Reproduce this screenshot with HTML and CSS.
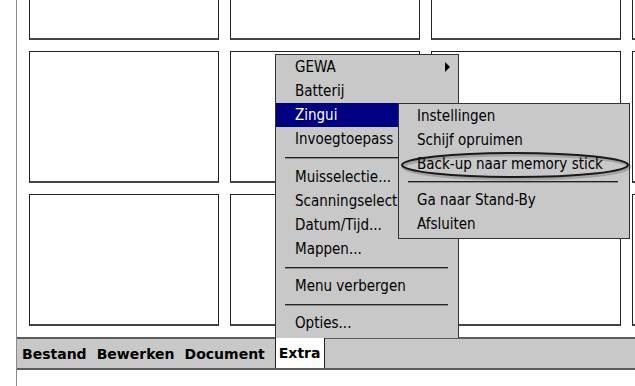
FILE: index.html
```html
<!DOCTYPE html>
<html lang="nl">
  <head>
    <meta charset="utf-8" />
    <title>Extra menu</title>
    <link rel="stylesheet" href="styles.css">
  </head>
  <body>
    <div class="device">
      <div class="workspace">
        <div class="grid">
          <div class="cell"></div><div class="cell"></div><div class="cell"></div><div class="cell"></div>
          <div class="cell"></div><div class="cell"></div><div class="cell"></div><div class="cell"></div>
          <div class="cell"></div><div class="cell"></div><div class="cell"></div><div class="cell"></div>
        </div>
      </div>

      <div class="menubar">
        <span class="mb-item">Bestand</span>
        <span class="mb-item">Bewerken</span>
        <span class="mb-item">Document</span>
        <span class="mb-item active">Extra</span>
      </div>

      <ul class="popup main-menu">
        <li class="item">GEWA <span class="arrow"></span></li>
        <li class="item">Batterij</li>
        <li class="item selected">Zingui</li>
        <li class="item">Invoegtoepass</li>
        <li class="sep first"></li>
        <li class="item">Muisselectie...</li>
        <li class="item">Scanningselect</li>
        <li class="item">Datum/Tijd...</li>
        <li class="item">Mappen...</li>
        <li class="sep"></li>
        <li class="item">Menu verbergen</li>
        <li class="sep"></li>
        <li class="item">Opties...</li>
      </ul>

      <ul class="popup sub-menu">
        <li class="item">Instellingen</li>
        <li class="item">Schijf opruimen</li>
        <li class="item">Back-up naar memory stick</li>
        <li class="sep"></li>
        <li class="item">Ga naar Stand-By</li>
        <li class="item">Afsluiten</li>
      </ul>

      <!-- hand drawn mark round the chosen item -->
      <svg class="mark" width="236" height="32" viewBox="0 0 236 32">
        <ellipse cx="117.5" cy="16.5" rx="113" ry="12" fill="none" stroke="#000" stroke-opacity="0.18" stroke-width="4" />
        <ellipse cx="116" cy="15" rx="113" ry="12" fill="none" stroke="#1a1a1a" stroke-width="2" />
      </svg>
    </div>
  </body>
</html>
```

FILE: styles.css
```css
html,
body {
  margin: 0;
  height: 100%;
  background: #fff;
}

*,
:after,
:before {
  box-sizing: border-box;
}

.device {
  position: relative;
  height: 386px;
  margin-left: 16px;
  border-left: 1px solid #8a8a8a;
  overflow: hidden;
  font-family: "DejaVu Sans Condensed", "DejaVu Sans", sans-serif;
  font-size: 15px;
  color: #000;
}

.workspace {
  height: 337px;
  overflow: hidden;
}

.grid {
  display: grid;
  grid-template-columns: repeat(4, 190px);
  grid-auto-rows: 132px;
  gap: 11px;
  margin-top: -92px;
  padding-left: 12px;
}

.cell {
  border: 1px solid #222;
  border-bottom: 2px solid #444;
  background: #fff;
}

.menubar {
  display: flex;
  align-items: stretch;
  gap: 10px;
  height: 33px;
  padding-left: 5px;
  background: #c8c8c8;
  border-top: 2px solid #5c5c5c;
  border-bottom: 2px solid #5c5c5c;
  font-family: "DejaVu Sans", sans-serif;
  font-size: 14px;
  font-weight: bold;
}

.mb-item {
  display: flex;
  align-items: center;
  padding-top: 1px;
}

.mb-item.active {
  background: #fff;
  border-left: 1px solid #222;
  border-right: 1px solid #222;
  margin-top: -2px;
  padding: 1px 4px 0 3px;
}

.popup {
  position: absolute;
  margin: 0;
  padding: 0;
  list-style: none;
  background: #c8c8c8;
  border: 1px solid #333;
}

.main-menu {
  left: 258px;
  top: 54px;
  width: 184px;
  height: 284px;
  border-bottom: none;
}

.sub-menu {
  left: 381px;
  top: 103px;
  width: 232px;
  height: 136px;
}

.item {
  position: relative;
  height: 24px;
  line-height: 24px;
  padding-left: 19px;
  white-space: nowrap;
  overflow: hidden;
}

.sub-menu .item {
  padding-left: 18px;
}

.item.selected {
  background: #000080;
  color: #fff;
}

.arrow {
  position: absolute;
  right: 8px;
  top: 7px;
  width: 0;
  height: 0;
  border-top: 5px solid transparent;
  border-bottom: 5px solid transparent;
  border-left: 5px solid #000;
}

.sep {
  height: 13px;
  padding-top: 6px;
  margin: 0 10px 0 9px;
}

.sep:before {
  content: "";
  display: block;
  border-top: 1px solid #222;
  border-bottom: 1px solid #8a8a8a;
}

.sep.first {
  height: 14px;
}

.sub-menu .sep {
  height: 12px;
  padding-top: 5px;
  margin-right: 11px;
}

.mark {
  position: absolute;
  left: 382px;
  top: 150px;
}
```
